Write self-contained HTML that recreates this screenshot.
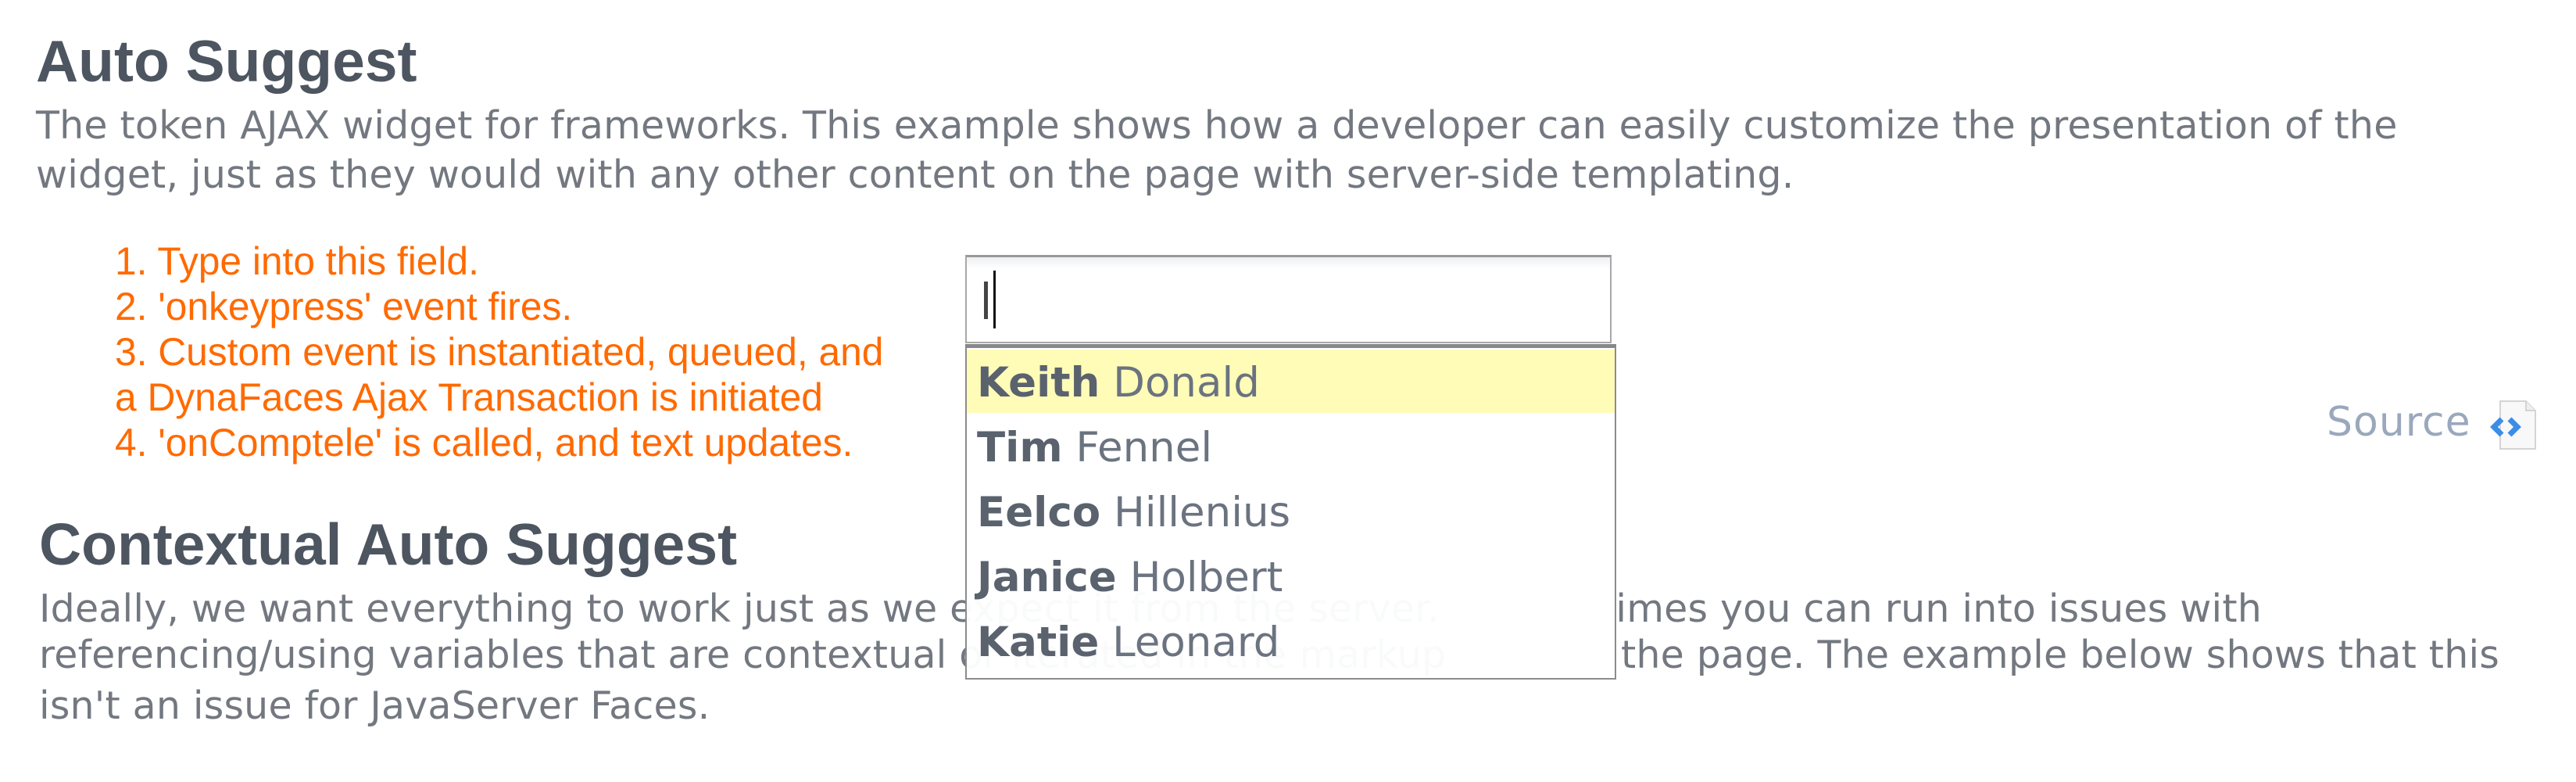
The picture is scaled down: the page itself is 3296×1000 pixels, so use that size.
<!DOCTYPE html>
<html><head><meta charset="utf-8"><style>
html,body{margin:0;padding:0;width:3296px;height:1000px;background:#fff;overflow:hidden;position:relative}
.a{position:absolute;white-space:nowrap;margin:0}
.h{font-family:"Liberation Sans",sans-serif;font-weight:bold;font-size:75px;line-height:72px;color:#4d5560}
.p{font-family:"DejaVu Sans",sans-serif;font-size:49px;line-height:63px;color:#737880;letter-spacing:0.2px}
.o{font-family:"Liberation Sans",sans-serif;font-size:49.7px;line-height:58px;color:#ff6a00}
.dd{position:absolute;left:1235px;top:440px;width:829px;height:422px;border:2px solid #8c8c8c;border-top:5px solid #888;background:rgba(255,255,255,0.96)}
.r{height:81px;line-height:85px;padding-left:13px;font-family:"DejaVu Sans",sans-serif;font-size:53px;color:#6b7380;white-space:nowrap}
.r b{color:#5a626e}
</style></head><body>
<div class="a h" style="left:46px;top:42px">Auto Suggest</div>
<div class="a p" style="left:46px;top:129px">The token AJAX widget for frameworks. This example shows how a developer can easily customize the presentation of the</div>
<div class="a p" style="left:46px;top:192px">widget, just as they would with any other content on the page with server-side templating.</div>

<div class="a o" style="left:147px;top:305px">1. Type into this field.<br>2. 'onkeypress' event fires.<br>3. Custom event is instantiated, queued, and<br>a DynaFaces Ajax Transaction is initiated<br>4. 'onComptele' is called, and text updates.</div>

<div class="a h" style="left:50px;top:660px">Contextual Auto Suggest</div>
<div class="a p" style="left:50px;top:747px">Ideally, we want everything to work just as we expect it from the server.</div>
<div class="a p" style="right:402px;top:747px">imes you can run into issues with</div>
<div class="a p" style="left:50px;top:806px">referencing/using variables that are contextual or iterated in the markup</div>
<div class="a p" style="right:98px;top:806px">the page. The example below shows that this</div>
<div class="a p" style="left:50px;top:871px">isn't an issue for JavaServer Faces.</div>

<div class="a" style="left:1235px;top:326px;width:823px;height:108px;border:2px solid #a8a8a8;border-top:3px solid #999;background:linear-gradient(#eeeff1,#fff 14px)"></div>
<div class="a" style="left:1259px;top:360px;width:5px;height:48px;background:#444"></div>
<div class="a" style="left:1271px;top:346px;width:3px;height:74px;background:#111"></div>

<div class="dd">
<div class="r" style="background:#fffcb8;margin-top:2px"><b>Keith</b> Donald</div>
<div class="r" style="margin-top:2px"><b>Tim</b> Fennel</div>
<div class="r" style="margin-top:2px"><b>Eelco</b> Hillenius</div>
<div class="r" style="margin-top:2px"><b>Janice</b> Holbert</div>
<div class="r" style="margin-top:2px"><b>Katie</b> Leonard</div>
</div>

<div class="a" style="left:2977px;top:505px;font-family:'DejaVu Sans',sans-serif;font-size:52px;line-height:70px;color:#9aa8bc;letter-spacing:1px">Source</div>
<svg class="a" style="left:3185px;top:510px" width="70" height="68" viewBox="0 0 70 68">
<path d="M14 3H47L59 15V64H14Z" fill="#f8f8f8" stroke="#d4d4d4" stroke-width="2"/>
<path d="M47 3V15H59" fill="#eee" stroke="#d4d4d4" stroke-width="2"/>
<path d="M16 26L6 36L16 46" fill="none" stroke="#3b8de8" stroke-width="7"/>
<path d="M26 26L36 36L26 46" fill="none" stroke="#3b8de8" stroke-width="7"/>
</svg>
</body></html>
